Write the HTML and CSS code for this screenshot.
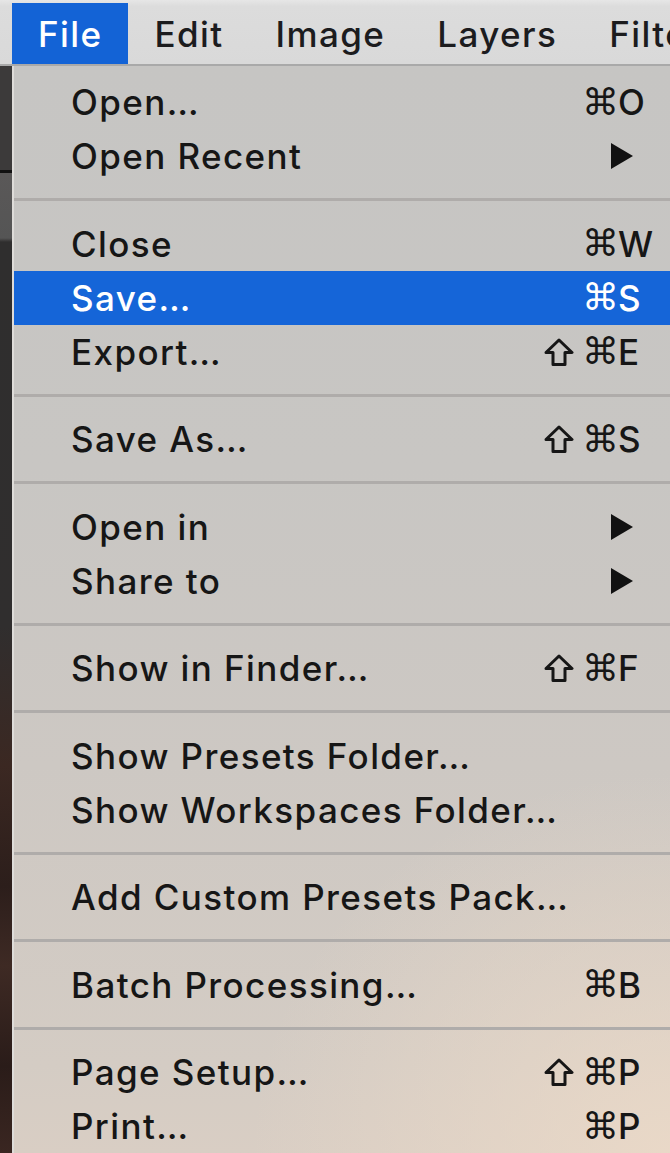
FILE: index.html
```html
<!DOCTYPE html>
<html>
<head>
<meta charset="utf-8">
<link rel="stylesheet" href="styles.css">
</head>
<body>
<div class="screen">
  <div class="menubar">
    <span class="mb-item active">File</span>
    <span class="mb-item">Edit</span>
    <span class="mb-item">Image</span>
    <span class="mb-item">Layers</span>
    <span class="mb-item">Filter</span>
  </div>
  <div class="desktop"></div>
  <div class="menu">
    <div class="row"><span class="label">Open…</span><span class="sc"><span class="cmd">⌘</span><span class="key">O</span></span></div>
    <div class="row"><span class="label">Open Recent</span><svg class="arrow" width="24" height="28" viewBox="0 0 24 28"><path d="M1 1 L23 14 L1 27 Z" fill="#111"/></svg></div>
    <div class="sep"></div>
    <div class="row"><span class="label">Close</span><span class="sc"><span class="cmd">⌘</span><span class="key">W</span></span></div>
    <div class="row hl"><span class="label">Save…</span><span class="sc"><span class="cmd">⌘</span><span class="key">S</span></span></div>
    <div class="row"><span class="label">Export…</span><span class="sc"><svg class="shift" width="30" height="28" viewBox="0 0 30 28"><path d="M15 2 L28 14.5 L21 14.5 L21 26.5 L9 26.5 L9 14.5 L2 14.5 Z"/></svg><span class="cmd">⌘</span><span class="key">E</span></span></div>
    <div class="sep"></div>
    <div class="row"><span class="label">Save As…</span><span class="sc"><svg class="shift" width="30" height="28" viewBox="0 0 30 28"><path d="M15 2 L28 14.5 L21 14.5 L21 26.5 L9 26.5 L9 14.5 L2 14.5 Z"/></svg><span class="cmd">⌘</span><span class="key">S</span></span></div>
    <div class="sep"></div>
    <div class="row"><span class="label">Open in</span><svg class="arrow" width="24" height="28" viewBox="0 0 24 28"><path d="M1 1 L23 14 L1 27 Z" fill="#111"/></svg></div>
    <div class="row"><span class="label">Share to</span><svg class="arrow" width="24" height="28" viewBox="0 0 24 28"><path d="M1 1 L23 14 L1 27 Z" fill="#111"/></svg></div>
    <div class="sep"></div>
    <div class="row"><span class="label">Show in Finder…</span><span class="sc"><svg class="shift" width="30" height="28" viewBox="0 0 30 28"><path d="M15 2 L28 14.5 L21 14.5 L21 26.5 L9 26.5 L9 14.5 L2 14.5 Z"/></svg><span class="cmd">⌘</span><span class="key">F</span></span></div>
    <div class="sep"></div>
    <div class="row"><span class="label">Show Presets Folder…</span></div>
    <div class="row"><span class="label">Show Workspaces Folder…</span></div>
    <div class="sep"></div>
    <div class="row"><span class="label">Add Custom Presets Pack…</span></div>
    <div class="sep"></div>
    <div class="row"><span class="label">Batch Processing…</span><span class="sc"><span class="cmd">⌘</span><span class="key">B</span></span></div>
    <div class="sep"></div>
    <div class="row"><span class="label">Page Setup…</span><span class="sc"><svg class="shift" width="30" height="28" viewBox="0 0 30 28"><path d="M15 2 L28 14.5 L21 14.5 L21 26.5 L9 26.5 L9 14.5 L2 14.5 Z"/></svg><span class="cmd">⌘</span><span class="key">P</span></span></div>
    <div class="row"><span class="label">Print…</span><span class="sc"><span class="cmd">⌘</span><span class="key">P</span></span></div>
  </div>
</div>
</body>
</html>
```
FILE: styles.css
```css
html, body {
  margin: 0;
  padding: 0;
}
body {
  width: 670px;
  height: 1153px;
  overflow: hidden;
  font-family: Inter, "Noto Sans", sans-serif;
  color: #161616;
}
.screen {
  display: grid;
  grid-template-columns: 12px 1fr;
  grid-template-rows: 66px 1fr;
  width: 670px;
  height: 1153px;
}
.menubar {
  grid-column: 1 / 3;
  display: flex;
  padding: 3px 0 0 12px;
  background: linear-gradient(#e6e6e6, #dcdcdc 10%, #d9d9d9);
  border-bottom: 2px solid #a9a9a9;
  white-space: nowrap;
  overflow: hidden;
}
.mb-item {
  display: flex;
  align-items: center;
  padding: 0 26px 0 26px;
  font-size: 35px;
  font-weight: 500;
  letter-spacing: 1.4px;
  height: 61px;
  color: #1c1c1e;
}
.mb-item.active {
  background: #1363d6;
  color: #fff;
}
.desktop {
  background: linear-gradient(#3c3a3a 0, #3c3a3a 104px, #111 104px, #111 107px, #5a5858 107px, #555 172px, #2f2e2e 176px, #302e2e 560px, #3b2822 700px, #2c1e1b 820px, #3e2a24 900px, #2a1c19 1000px, #3a2621 1087px);
}
.menu {
  border-left: 2px solid #dedcd9;
  padding-top: 9px;
  background:
    radial-gradient(ellipse 420px 380px at 100% 100%, rgba(236, 218, 200, 0.85), rgba(236, 218, 200, 0) 100%),
    linear-gradient(#c6c5c3 0, #c8c6c3 400px, #cdc8c3 700px, #d4ccc4 1000px, #d9cec4 100%);
}
.row {
  display: flex;
  align-items: center;
  height: 54px;
  padding-left: 57px;
  font-size: 35px;
  font-weight: 500;
  letter-spacing: 1.4px;
  white-space: nowrap;
}
.row.hl {
  background: #1565d8;
  color: #fff;
}
.label {
  flex: 1;
}
.sc {
  display: flex;
  align-items: center;
}
.shift {
  margin-right: 8px;
  fill: none;
  stroke: currentColor;
  stroke-width: 3;
  stroke-linejoin: round;
}
.cmd {
  font-family: "DejaVu Sans", sans-serif;
  font-size: 37px;
  width: 36px;
  letter-spacing: 0;
}
.key {
  width: 52px;
}
.arrow {
  margin-right: 36px;
}
.sep {
  height: 33.5px;
  display: flex;
  align-items: center;
}
.sep::before {
  content: "";
  flex: 1;
  height: 3px;
  background: #afacaa;
}
```
